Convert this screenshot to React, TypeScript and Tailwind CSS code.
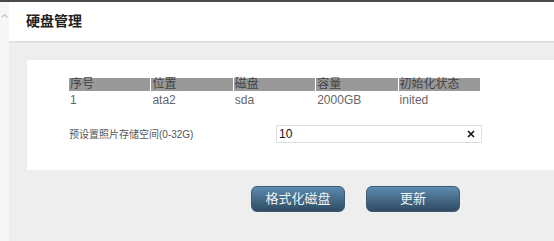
const cjk = { fontFamily: '"Liberation Sans", "Noto Sans CJK SC", sans-serif' };

const cols = ['序号', '位置', '磁盘', '容量', '初始化状态'];
const row = ['1', 'ata2', 'sda', '2000GB', 'inited'];

export default function App() {
  return (
    <div style={cjk} className="flex h-[241px] w-[554px] flex-col overflow-hidden bg-[#eeeeee]">
      <div className="h-[2px] bg-[#4a4a4a]" />
      <div className="flex flex-1">
        <div className="w-[9px] bg-[#f7f7f7] pt-[11px]">
          <svg width="9" height="6" viewBox="0 0 9 6">
            <path d="M1.5 4.5 L4.5 1.5 L7.5 4.5" fill="none" stroke="#c8c8c8" strokeWidth="1.2" />
          </svg>
        </div>
        <div className="flex flex-1 flex-col">
          <div className="flex h-[40px] items-center border-b border-[#dcdcdc] bg-white pl-[17px] shadow-[0_1px_1px_rgba(0,0,0,0.04)]">
            <h1 className="text-[14px] font-bold text-[#222]">硬盘管理</h1>
          </div>
          <div className="pl-[18px] pt-[18px]">
            <div className="h-[110px] bg-white pl-[42px] pt-[18px]">
              <div className="grid w-[411px] grid-cols-5 gap-x-[1px] text-[12px] leading-[13px]">
                {cols.map((c) => (
                  <div key={c} className="bg-[#999999] pl-[1px] text-[#444]">
                    {c}
                  </div>
                ))}
                {row.map((c, i) => (
                  <div key={i} className="pl-[1px] pt-[3px] text-[#666]">
                    {c}
                  </div>
                ))}
              </div>
              <div className="mt-[18px] flex items-center">
                <span className="w-[207px] text-[10px] text-[#555]">预设置照片存储空间(0-32G)</span>
                <div className="flex h-[18px] w-[206px] items-center justify-between border border-[#dedede] pl-[2px] pr-[6px]">
                  <span className="text-[12px] text-[#111]">10</span>
                  <svg width="8" height="8" viewBox="0 0 8 8">
                    <path d="M1 1 L7 7 M7 1 L1 7" stroke="#111" strokeWidth="1.6" />
                  </svg>
                </div>
              </div>
            </div>
            <div className="flex gap-[21px] pl-[224px] pt-[16px]">
              <button className="h-[26px] w-[94px] rounded-[6px] border border-[#3d5a72] bg-gradient-to-b from-[#5d8cb1] to-[#2f4b62] text-[13px] text-[#eef3f7]">
                格式化磁盘
              </button>
              <button className="h-[26px] w-[94px] rounded-[6px] border border-[#3d5a72] bg-gradient-to-b from-[#5d8cb1] to-[#2f4b62] text-[13px] text-[#eef3f7]">
                更新
              </button>
            </div>
          </div>
        </div>
      </div>
    </div>
  );
}
